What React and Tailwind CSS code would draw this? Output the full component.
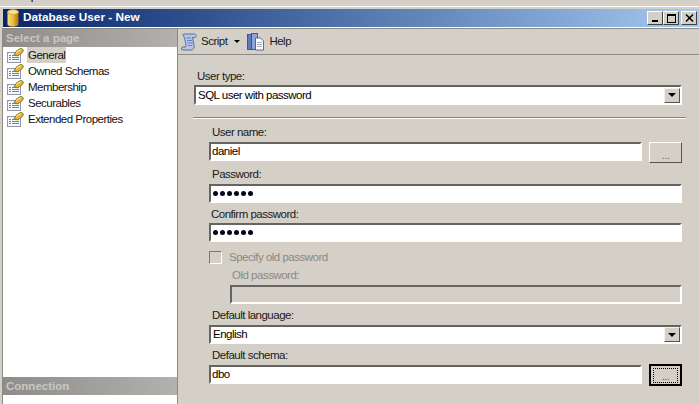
import React from 'react';

const PageIcon = () => (
  <svg width="17" height="15" viewBox="0 0 17 15" className="shrink-0">
    <rect x="0.500" y="4.500" width="13" height="10" fill="#f6f7fb" stroke="#8f98b0" />
    <path d="M2 7.500h2M5 7.500h7M2 9.500h2M5 9.500h7M2 11.500h2M5 11.500h7" stroke="#6f86bc" strokeWidth="1" />
    <path d="M7 6.500l3-4 4-2.500 2.500 2-1 2.500-5 3.500z" fill="#e6bb2c" stroke="#5f5424" strokeWidth="0.7" />
    <path d="M9.500 4.500l4-3" stroke="#fff2a8" strokeWidth="1" />
  </svg>
);

const DbIcon = () => (
  <svg width="12" height="18" viewBox="0 0 12 18" className="shrink-0">
    <defs>
      <linearGradient id="dbg" x1="0" x2="1" y1="0" y2="0">
        <stop offset="0" stopColor="#f9de80" />
        <stop offset="0.5" stopColor="#ecbd38" />
        <stop offset="1" stopColor="#a87610" />
      </linearGradient>
    </defs>
    <path d="M0.500 3v12c0 3.500 11 3.500 11 0V3z" fill="url(#dbg)" />
    <ellipse cx="6" cy="3" rx="5.500" ry="2.500" fill="#f6e08c" stroke="#c89a24" strokeWidth="0.6" />
  </svg>
);

const ScriptIcon = () => (
  <svg width="17" height="18" viewBox="0 0 17 18" className="shrink-0">
    <path d="M2.500 1h11c2 0 2.500 2.500 .5 3.500h-2.500l1.500 8c.5 2.500-1 4.500-2.500 4.500H1.500c-1.500 0-1.500-3 .5-3h2.500L5 12 3.500 5C3 3.500 1 2 2.500 1z" fill="#b4c6e6" stroke="#47659f" strokeWidth="0.9" />
    <path d="M5.500 5h4.500M6 7.500h5M6.500 10h5M7 12.500h4" stroke="#5b78b4" strokeWidth="0.9" />
  </svg>
);

const HelpIcon = () => (
  <svg width="17" height="18" viewBox="0 0 17 18" className="shrink-0">
    <rect x="0.500" y="1.500" width="6" height="15" fill="#5f79ba" stroke="#2f4684" strokeWidth="0.8" />
    <rect x="4.500" y="0.500" width="6" height="16" fill="#8fa5d8" stroke="#2f4684" strokeWidth="0.8" />
    <path d="M8.500 5h5l3 3v9h-8z" fill="#fff" stroke="#3a4a78" strokeWidth="0.8" />
    <path d="M10 9.500h5M10 11.500h5M10 13.500h5" stroke="#8a96b8" strokeWidth="0.8" />
  </svg>
);

// sunken win2k style edge
const sunken = 'border-2 border-t-[#666460] border-l-[#666460] border-r-white border-b-white';

const Field = ({ value, className = '', disabled }) => (
  <div className={`${sunken} h-[19px] flex items-center pl-[1px] text-black ${disabled ? 'bg-[#d4d0c8]' : 'bg-white'} ${className}`}>
    <span>{value}</span>
  </div>
);

const Dots = () => (
  <div className={`${sunken} h-[19px] flex items-center gap-[2px] pl-[2px] bg-white`}>
    {[0, 1, 2, 3, 4, 5].map((i) => (
      <span key={i} className="w-[5px] h-[5px] rounded-full bg-[#05051a]"></span>
    ))}
  </div>
);

const Combo = ({ value, className = '' }) => (
  <div className={`${sunken} h-[19px] flex items-center justify-between bg-white text-black ${className}`}>
    <span className="pl-[2px] mt-[1px]">{value}</span>
    <span className="w-[16px] h-[15px] bg-[#d4d0c8] border border-t-[#f4f2ee] border-l-[#f4f2ee] border-r-[#55534f] border-b-[#55534f] flex items-center justify-center">
      <span className="w-0 h-0 border-l-[4px] border-r-[4px] border-t-[4px] border-l-transparent border-r-transparent border-t-black"></span>
    </span>
  </div>
);

const Label = ({ children, className = '' }) => (
  <div className={`leading-[14px] text-[#1a1a1a] ${className}`}>{children}</div>
);

const pages = ['General', 'Owned Schemas', 'Membership', 'Securables', 'Extended Properties'];

export default function App() {
  return (
    <div className="w-[699px] h-[404px] overflow-hidden bg-[#d4d0c8] flex flex-col text-[11.500px] tracking-[-0.5px]" style={{ fontFamily: '"Liberation Sans", Arial, sans-serif' }}>
      {/* menu strip cut off at the top of the shot */}
      <div className="h-[6px] overflow-hidden shrink-0">
        <div className="pl-[15px] -mt-[11px] leading-[14px] text-black">Help</div>
      </div>
      <div className="h-[1px] bg-white shrink-0"></div>
      <div className="h-[2px] shrink-0"></div>

      <div className="h-[18px] shrink-0 ml-[3px] flex items-center justify-between bg-gradient-to-r from-[#0a246a] to-[#a6caf0] pr-[2px]">
        <div className="flex items-center gap-[4px] pl-[4px]">
          <DbIcon />
          <span className="text-white font-bold text-[11.800px] tracking-normal">Database User - New</span>
        </div>
        <div className="flex items-center">
          {[0, 1].map((i) => (
            <span key={i} className="w-[16px] h-[14px] bg-[#d4d0c8] border border-t-white border-l-white border-r-[#404040] border-b-[#404040] flex items-center justify-center">
              {i === 0 ? (
                <span className="w-[6px] h-[2px] bg-black mt-[6px]"></span>
              ) : (
                <span className="w-[9px] h-[9px] border border-t-2 border-black"></span>
              )}
            </span>
          ))}
          <span className="ml-[2px] w-[16px] h-[14px] bg-[#d4d0c8] border border-t-white border-l-white border-r-[#404040] border-b-[#404040] flex items-center justify-center">
            <svg width="9" height="8" viewBox="0 0 9 8"><path d="M1 0.500l7 7M8 0.500l-7 7" stroke="#000" strokeWidth="1.500" /></svg>
          </span>
        </div>
      </div>
      <div className="h-[1px] bg-white shrink-0 ml-[3px]"></div>

      <div className="flex-1 flex min-h-0 pl-[2px]">
        <div className="w-[176px] shrink-0 flex flex-col border-l border-t border-r border-[#8c8a85] bg-white">
          <div className="h-[18px] shrink-0 flex items-center pl-[3px] pt-[1px] bg-gradient-to-r from-[#8f8d8a] to-[#b3b1ae] text-[#c9c7c2] font-bold text-[11.500px] tracking-normal">Select a page</div>
          <div className="flex-1 flex flex-col pl-[4px]">
            {pages.map((p, i) => (
              <div key={p} className="h-[16px] flex items-center gap-[3px]">
                <PageIcon />
                <span className={`px-[1px] leading-[16px] text-[#111] ${i === 0 ? 'bg-[#d4d0c8]' : ''}`}>{p}</span>
              </div>
            ))}
          </div>
          <div className="h-[18px] shrink-0 flex items-center pl-[3px] pt-[1px] bg-gradient-to-r from-[#8f8d8a] to-[#b3b1ae] text-[#c9c7c2] font-bold text-[11.500px] tracking-normal">Connection</div>
          <div className="h-[9px] shrink-0"></div>
        </div>

        <div className="flex-1 flex flex-col min-w-0">
          <div className="h-[27px] shrink-0 border-b border-[#8c8a85] border-t border-t-[#8c8a85] flex items-center pl-[3px] text-[#1a1a1a]">
            <ScriptIcon />
            <span className="ml-[3px]">Script</span>
            <span className="ml-[7px] w-0 h-0 border-l-[3px] border-r-[3px] border-t-[3px] border-l-transparent border-r-transparent border-t-black"></span>
            <span className="ml-[7px]"><HelpIcon /></span>
            <span className="ml-[5px]">Help</span>
          </div>

          <div className="flex-1 pl-[15px] pr-[13px] pt-[14px]">
            <Label className="pl-[4px]">User type:</Label>
            <Combo value="SQL user with password" className="h-[20px] mt-[2px] ml-[1px] mr-[4px]" />

            <div className="mt-[12px] border-t border-t-[#85837e] border-b border-b-white h-[2px]"></div>

            <div className="pl-[16px] pr-[4px] mt-[6px]">
              <Label className="pl-[3px]">User name:</Label>
              <div className="flex gap-[7px] mt-[3px]">
                <Field value="daniel" className="flex-1" />
                <div className="w-[33px] h-[21px] bg-[#d4d0c8] border border-t-white border-l-white border-r-[#55534f] border-b-[#55534f] flex items-end justify-center text-[#77756f] leading-[14px]">...</div>
              </div>
              <Label className="pl-[3px] mt-[4px]">Password:</Label>
              <div className="mt-[3px]"><Dots /></div>
              <Label className="pl-[2px] mt-[4px]">Confirm password:</Label>
              <div className="mt-[2px]"><Dots /></div>

              <div className="flex items-center mt-[8px] h-[14px]">
                <span className="w-[13px] h-[13px] border border-t-[#77756f] border-l-[#77756f] border-r-white border-b-white"></span>
                <span className="ml-[7px] mt-[1px] text-[#8b8983]">Specify old password</span>
              </div>
              <div className="pl-[21px]">
                <Label className="!text-[#8b8983] pl-[2px] mt-[4px]">Old password:</Label>
                <Field value="" disabled className="mt-[3px]" />
              </div>
              <Label className="pl-[3px] mt-[4px]">Default language:</Label>
              <Combo value="English" className="mt-[3px]" />
              <Label className="pl-[3px] mt-[4px]">Default schema:</Label>
              <div className="flex gap-[7px] mt-[3px]">
                <Field value="dbo" className="flex-1" />
                <div className="w-[33px] h-[22px] -mt-[1px] bg-[#d4d0c8] border-2 border-black flex items-center justify-center">
                  <div className="w-[25px] h-[15px] border border-dotted border-black flex items-end justify-center text-[#55534f] text-[10px] leading-[10px]">...</div>
                </div>
              </div>
            </div>
          </div>
        </div>
      </div>
    </div>
  );
}
